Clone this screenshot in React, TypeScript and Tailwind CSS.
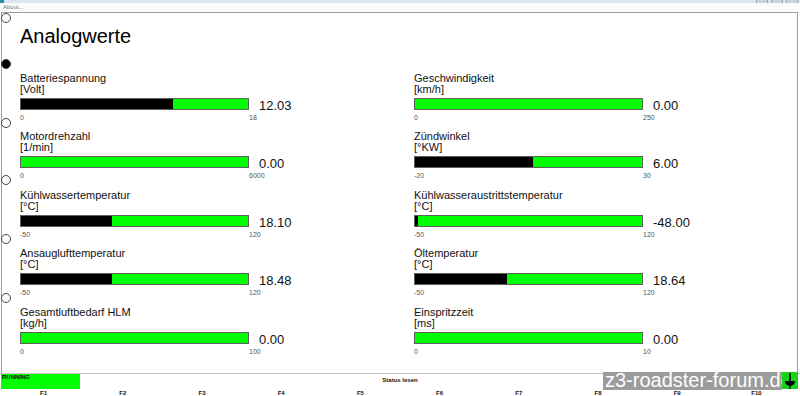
import React from 'react';

interface Gauge {
  label: string;
  unit: string;
  min: number;
  max: number;
  value: number;
}

const GAUGES: Gauge[] = [
  { label: 'Batteriespannung', unit: '[Volt]', min: 0, max: 18, value: 12.03 },
  { label: 'Geschwindigkeit', unit: '[km/h]', min: 0, max: 250, value: 0 },
  { label: 'Motordrehzahl', unit: '[1/min]', min: 0, max: 6000, value: 0 },
  { label: 'Zündwinkel', unit: '[°KW]', min: -20, max: 30, value: 6 },
  { label: 'Kühlwassertemperatur', unit: '[°C]', min: -50, max: 120, value: 18.1 },
  { label: 'Kühlwasseraustrittstemperatur', unit: '[°C]', min: -50, max: 120, value: -48 },
  { label: 'Ansauglufttemperatur', unit: '[°C]', min: -50, max: 120, value: 18.48 },
  { label: 'Öltemperatur', unit: '[°C]', min: -50, max: 120, value: 18.64 },
  { label: 'Gesamtluftbedarf HLM', unit: '[kg/h]', min: 0, max: 100, value: 0 },
  { label: 'Einspritzzeit', unit: '[ms]', min: 0, max: 10, value: 0 },
];

const FKEYS = ['F1', 'F2', 'F3', 'F4', 'F5', 'F6', 'F7', 'F8', 'F9', 'F10'];

// radio buttons sit on the left frame edge, one per gauge row
const RADIOS = [
  { top: 'top-[13px]', filled: false },
  { top: 'top-[59px]', filled: true },
  { top: 'top-[118px]', filled: false },
  { top: 'top-[175px]', filled: false },
  { top: 'top-[234px]', filled: false },
  { top: 'top-[293px]', filled: false },
];

const GaugeRow: React.FC<{ g: Gauge }> = ({ g }) => {
  const pct = Math.max(0, Math.min(1, (g.value - g.min) / (g.max - g.min))) * 100;
  return (
    <div className="flex flex-col">
      <div className="text-[11px] leading-[11px] text-[#111]">{g.label}</div>
      <div className="text-[11px] leading-[11px] text-[#111]">{g.unit}</div>
      <div className="flex items-start mt-[3px]">
        <div className="w-[229px] h-[12px] border border-[#5f5f5f] bg-[#00ff00] flex">
          <div className="h-full bg-black" style={{ width: `${pct}%` }} />
        </div>
        <div className="ml-[10px] mt-[1px] text-[13px] leading-[13px] text-[#111]">
          {g.value.toFixed(2)}
        </div>
      </div>
      <div className="flex mt-[2px] text-[7px] leading-[7px] text-[#555]">
        <div className="w-[229px]">{g.min}</div>
        <div>{g.max}</div>
      </div>
    </div>
  );
};

export default function App() {
  return (
    <div
      className="relative w-[800px] h-[396px] overflow-hidden bg-white"
      style={{ fontFamily: '"Liberation Sans", Arial, sans-serif' }}
    >
      {/* title bar remnant */}
      <div className="h-[3px] bg-[#dbe6f3] flex justify-between">
        <div className="w-[4px] h-[3px] bg-[#2c8c9c]" />
        <div className="flex gap-[3px] pr-[2px]">
          <div className="w-[12px] h-[3px] bg-[#c9d3df] border-x border-[#9aa6b4]" />
          <div className="w-[12px] h-[3px] bg-[#c9d3df] border-x border-[#9aa6b4]" />
          <div className="w-[12px] h-[3px] bg-[#c9d3df] border-x border-[#9aa6b4]" />
        </div>
      </div>

      {/* menu bar */}
      <div className="h-[9px] pl-[3px] pt-[1px] text-[6px] leading-[7px] text-[#777] bg-[#fbfbfb]">
        About...
      </div>

      {/* main panel */}
      <div className="h-[361px] w-[797px] ml-[1px] border-t border-l border-r border-[#a0a0a0] pl-[18px] pt-[13px]">
        <h1 className="text-[20px] leading-[20px] text-black font-normal">Analogwerte</h1>
        <div className="grid grid-cols-[394px_1fr] auto-rows-[58.5px] mt-[26.5px]">
          {GAUGES.map((g) => (
            <GaugeRow key={g.label} g={g} />
          ))}
        </div>
      </div>

      {/* status bar */}
      <div className="h-[23px] border-t border-[#c4c4c4] bg-white">
        <div className="h-[17px] grid grid-cols-[80px_1fr_80px]">
          <div className="ml-[1px] h-[15px] bg-[#00ff00] text-[6px] leading-[7px] font-bold pl-[1px] text-[#111]">
            RUNNING
          </div>
          <div className="text-center text-[6px] leading-[7px] font-bold pt-[3px] text-[#111]">
            Status lesen
          </div>
          <div />
        </div>
        <div className="grid grid-cols-10 px-[4px] text-[6px] leading-[5px] font-bold text-[#111]">
          {FKEYS.map((k) => (
            <div key={k} className="text-center">
              {k}
            </div>
          ))}
        </div>
      </div>

      {/* radio buttons on the frame edge */}
      {RADIOS.map((r, i) => (
        <div
          key={i}
          className={`absolute left-[1px] ${r.top} w-[10px] h-[10px] rounded-full border border-[#444] ${
            r.filled ? 'bg-black' : 'bg-white'
          }`}
        />
      ))}

      {/* forum watermark */}
      <div className="absolute left-[603px] top-[372px] w-[179px] h-[18px] bg-[#9c9c9c]">
        <div className="pl-[2px] text-[20px] leading-[17px] text-white whitespace-nowrap">
          z3-roadster-forum.de
        </div>
      </div>
      <div className="absolute left-[782px] top-[372px] w-[16px] h-[17px] bg-[#18d418] flex items-center justify-center">
        <svg width="14" height="16" viewBox="0 0 14 16">
          <line x1="7" y1="0" x2="7" y2="9" stroke="black" strokeWidth="1.5" />
          <path d="M2 8 H12 A5 5 0 0 1 2 8 Z" fill="black" />
          <line x1="7" y1="12" x2="7" y2="16" stroke="black" strokeWidth="1.2" />
        </svg>
      </div>
    </div>
  );
}
